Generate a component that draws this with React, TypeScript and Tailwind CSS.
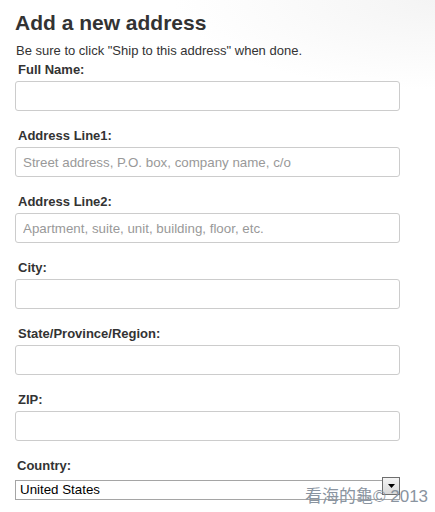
import React from "react";

const fields = [
  { label: "Full Name:", placeholder: "" },
  { label: "Address Line1:", placeholder: "Street address, P.O. box, company name, c/o" },
  { label: "Address Line2:", placeholder: "Apartment, suite, unit, building, floor, etc." },
  { label: "City:", placeholder: "" },
  { label: "State/Province/Region:", placeholder: "" },
  { label: "ZIP:", placeholder: "" },
];

const App = () => {
  return (
    <div className="relative min-h-[512px] w-[435px] overflow-hidden bg-white bg-[radial-gradient(ellipse_260px_90px_at_100%_0%,#f4f4f4,#ffffff)] pl-[15px] pt-[11px] font-['Liberation_Sans',Arial,sans-serif] text-[#333]">
      <h1 className="text-[21px] font-bold leading-6">Add a new address</h1>
      <p className="mt-2 pl-px text-[13px] leading-4">Be sure to click "Ship to this address" when done.</p>

      <form className="mt-[3px] flex flex-col gap-[17px]">
        {fields.map((f, i) => (
          <div key={i} className="flex flex-col">
            <label className="mb-[3px] pl-[3px] text-[13px] font-bold leading-4">{f.label}</label>
            <input
              type="text"
              placeholder={f.placeholder}
              className="h-[30px] w-[385px] rounded-[3px] border border-[#cccccc] bg-white px-[7px] text-[13.333px] text-[#333] outline-none placeholder:text-[#999]"
            />
          </div>
        ))}

        <div className="flex flex-col">
          <label className="mb-[3px] pl-[2px] text-[13px] font-bold leading-4">Country:</label>
          <div className="relative h-[20px] w-[385px]">
            <select
              defaultValue="United States"
              className="h-full w-full appearance-none rounded-none border border-[#a5a5a5] bg-white pl-[4px] text-[13.333px] leading-[18px] text-black outline-none"
            >
              <option>United States</option>
              <option>Canada</option>
              <option>Taiwan</option>
            </select>
            <span className="pointer-events-none absolute right-0 top-0 flex h-[18px] w-[18px] items-center justify-center border border-[#6e6e6e] bg-[linear-gradient(#f4f4f4,#d9d9d9)]">
              <svg width="7" height="4" viewBox="0 0 7 4">
                <path d="M0 0h7L3.5 4z" fill="#000" />
              </svg>
            </span>
          </div>
        </div>
      </form>

      <div className="pointer-events-none absolute left-[305px] top-[487px] whitespace-nowrap font-['Liberation_Sans','Noto_Sans_CJK_TC',sans-serif] text-[17px] leading-5 text-[#8a94a0]">
        看海的龜© 2013
      </div>
    </div>
  );
};

export default App;
